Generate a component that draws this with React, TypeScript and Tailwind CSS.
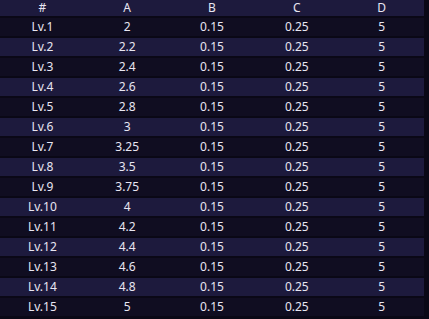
const rows = [
  ['Lv.1', '2'],
  ['Lv.2', '2.2'],
  ['Lv.3', '2.4'],
  ['Lv.4', '2.6'],
  ['Lv.5', '2.8'],
  ['Lv.6', '3'],
  ['Lv.7', '3.25'],
  ['Lv.8', '3.5'],
  ['Lv.9', '3.75'],
  ['Lv.10', '4'],
  ['Lv.11', '4.2'],
  ['Lv.12', '4.4'],
  ['Lv.13', '4.6'],
  ['Lv.14', '4.8'],
  ['Lv.15', '5'],
];

export default function App() {
  return (
    <div className="w-[429px] h-[319px] bg-[#0a0816] overflow-hidden font-['Noto_Sans',sans-serif] text-[12px] text-[#e8e6f2]">
      <div className="w-[424px] flex flex-col gap-[2px]">
        <div className="grid grid-cols-5 h-[16px] items-center text-center bg-[#1d1a3d] leading-none">
          <span>#</span>
          <span>A</span>
          <span>B</span>
          <span>C</span>
          <span>D</span>
        </div>
        {rows.map(([lv, a], i) => (
          <div
            key={lv}
            className={
              'grid grid-cols-5 h-[18px] items-center text-center leading-none ' +
              (i % 2 === 0 ? 'bg-[#100d21]' : 'bg-[#1d1a3d]')
            }
          >
            <span>{lv}</span>
            <span>{a}</span>
            <span>0.15</span>
            <span>0.25</span>
            <span>5</span>
          </div>
        ))}
      </div>
    </div>
  );
}
